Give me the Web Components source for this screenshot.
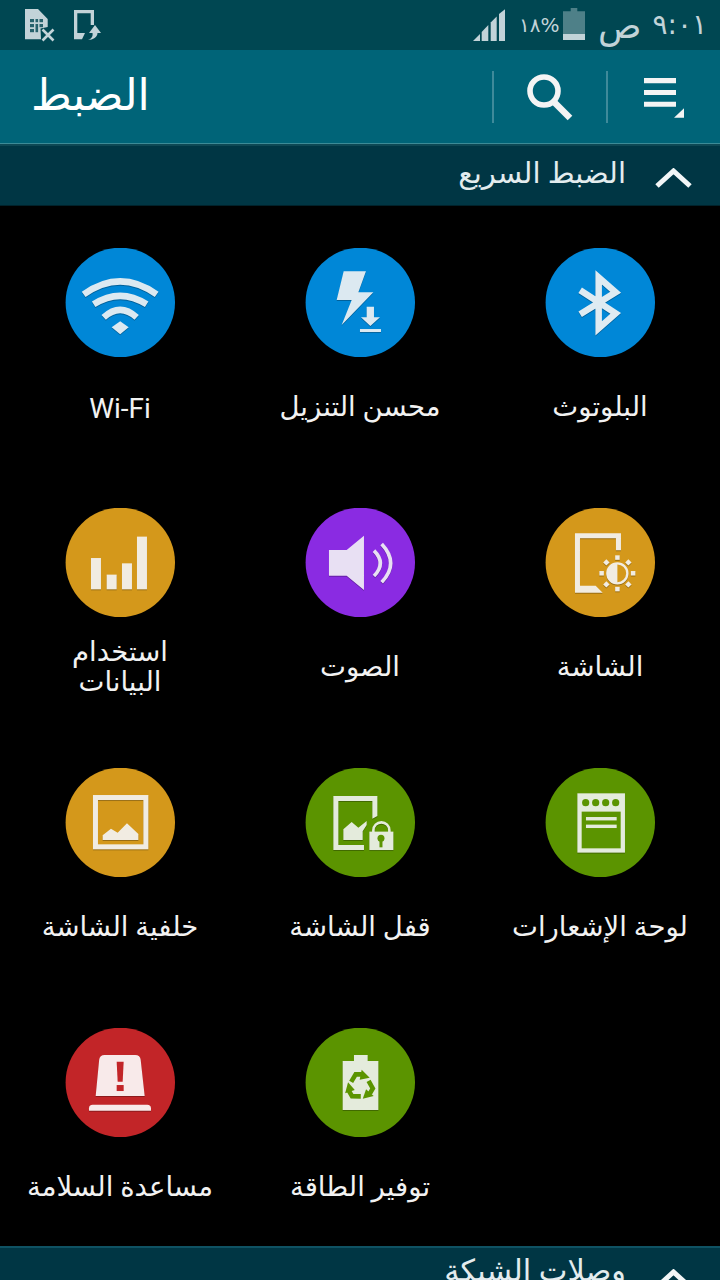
<!DOCTYPE html>
<html lang="ar" dir="rtl">
<head>
<meta charset="utf-8">
<title>الضبط</title>
<style>
  html, body { margin: 0; padding: 0; background: #000; }
  body { width: 720px; height: 1280px; overflow: hidden; font-family: Roboto, "DejaVu Sans", sans-serif; }
</style>
</head>
<body>
<status-bar></status-bar>
<action-bar title="الضبط"></action-bar>
<section-header label="الضبط السريع"></section-header>
<tile-grid>
  <quick-tile icon="bluetooth" color="#0087d7">البلوتوث</quick-tile>
  <quick-tile icon="booster" color="#0087d7">محسن التنزيل</quick-tile>
  <quick-tile icon="wifi" color="#0087d7"><span style="display:inline-block;padding-top:4px;font-size:28px">Wi-Fi</span></quick-tile>
  <quick-tile icon="display" color="#d4981b">الشاشة</quick-tile>
  <quick-tile icon="sound" color="#8a2be2">الصوت</quick-tile>
  <quick-tile icon="data" color="#d4981b">استخدام<br>البيانات</quick-tile>
  <quick-tile icon="panel" color="#5b9400">لوحة الإشعارات</quick-tile>
  <quick-tile icon="lock" color="#5b9400">قفل الشاشة</quick-tile>
  <quick-tile icon="wallpaper" color="#d4981b">خلفية الشاشة</quick-tile>
  <quick-tile></quick-tile>
  <quick-tile icon="power" color="#5b9400">توفير الطاقة</quick-tile>
  <quick-tile icon="safety" color="#c22528">مساعدة السلامة</quick-tile>
</tile-grid>
<section-header label="وصلات الشبكة" edge></section-header>

<script>
// icon art is in a 110x110 box, one entry per tile
const RECYCLE = `<path d="M45.5 53.5L50 46H56" fill="none" stroke="#5b9400" stroke-width="4.6"/><path d="M56 41.5L64 49.5L54 51.5Z" fill="#5b9400"/>`;
const ICONS = {
  wifi: `<g fill="none" stroke="#dce9f1" stroke-width="6.5">
      <path d="M18 47Q54.5 21 91 47"/><path d="M28 57Q54.5 40 81 57"/><path d="M38 70Q54.5 55 71 70"/></g>
    <path d="M46 80L54.5 74L63 80L54.5 87Z" fill="#dce9f1"/>`,
  booster: `<g fill="#dce9f1">
      <path d="M38 24H60.3L52.7 45H67.7L36 77.7L46 52.7H31Z"/>
      <path d="M61 59.3H68.3V70H74.3L64.7 78.7L55.3 70H61Z"/>
      <rect x="54.3" y="81.7" width="21" height="3"/></g>`,
  bluetooth: `<path d="M34.5 43L70 66L53 81V30L70 45L34.5 67" fill="none" stroke="#dfebf2" stroke-width="6.5"/>`,
  data: `<g fill="#f1ece2"><rect x="25.3" y="50.7" width="10" height="31.3"/><rect x="41" y="67.3" width="10" height="14.7"/>
      <rect x="56.3" y="56" width="10" height="26"/><rect x="71.3" y="29.3" width="10" height="52.7"/></g>`,
  sound: `<path d="M23.3 42.7H41L58.3 28.3V82.7L41 68.3H23.3Z" fill="#e8e0f3"/>
    <g fill="none" stroke="#e8e0f3" stroke-width="3.6"><path d="M68.3 43.3Q81 56 68.3 68.7"/><path d="M76 36.7Q94 56 76 75"/></g>`,
  display: `<path d="M29.3 26H75.3V43H70.3V31H34.3V78.3H50L57 85.3H29.3Z" fill="#f1ece2"/>
    <circle cx="71.7" cy="66" r="10" fill="#d4981b" stroke="#f1ece2" stroke-width="2.4"/>
    <path d="M71.7 56V76A10 10 0 0 1 71.7 56Z" fill="#f1ece2"/>
    <g fill="#f1ece2"><rect x="69.5" y="48" width="4.5" height="4.5"/><rect x="69.5" y="79.5" width="4.5" height="4.5"/>
      <rect x="53.7" y="63.7" width="4.5" height="4.5"/><rect x="85.2" y="63.7" width="4.5" height="4.5"/>
      <rect x="58.5" y="52.8" width="4.5" height="4.5" transform="rotate(45 60.7 55)"/><rect x="80.5" y="52.8" width="4.5" height="4.5" transform="rotate(45 82.7 55)"/>
      <rect x="58.5" y="74.8" width="4.5" height="4.5" transform="rotate(45 60.7 77)"/><rect x="80.5" y="74.8" width="4.5" height="4.5" transform="rotate(45 82.7 77)"/></g>`,
  wallpaper: `<rect x="29.8" y="30.2" width="50.4" height="49.3" fill="none" stroke="#f1ece2" stroke-width="5"/>
    <path d="M37 72.7V68L45.3 61.3L52 65.3L61.3 56L72.7 66.7V72.7Z" fill="#f1ece2"/>`,
  lock: `<path d="M27.7 28.7H71.7V48.7L66.7 51.3V33.7H32.7V77.7H58.3V82.7H27.7Z" fill="#e4ebdc"/>
    <path d="M37.7 72.7V62L46 54.7L52.7 60.3L61 53.7V57.7L57 64V72.7Z" fill="#e4ebdc"/>
    <path d="M67.7 65V63A8 8 0 0 1 83.7 63V65" fill="none" stroke="#e4ebdc" stroke-width="2.6"/>
    <rect x="63.7" y="64.3" width="24" height="18.4" fill="#e4ebdc"/>
    <circle cx="75.3" cy="71" r="3.5" fill="#5b9400"/><rect x="73.8" y="72" width="3" height="8" fill="#5b9400"/>`,
  panel: `<rect x="31.7" y="26" width="47.6" height="59.3" fill="#e4ebdc"/>
    <g fill="#5b9400"><circle cx="40" cy="35.3" r="3.6"/><circle cx="50" cy="35.3" r="3.6"/><circle cx="60" cy="35.3" r="3.6"/><circle cx="70" cy="35.3" r="3.6"/>
      <rect x="36" y="44.3" width="39" height="36.7"/></g>
    <g fill="#e4ebdc"><rect x="40.3" y="49.7" width="30.7" height="3.4"/><rect x="40.3" y="57.3" width="30.7" height="3.4"/></g>`,
  safety: `<path d="M30 68.7L33.5 32.5Q34 27.7 39 27.7H69.5Q74.5 27.7 75 32.5L79 68.7Z" fill="#f8eaea"/>
    <path d="M51 34.3H58L57 54.3H52Z" fill="#c22528"/><rect x="51" y="57.7" width="7" height="6" fill="#c22528"/>
    <path d="M23.3 83.3V81Q23.3 77.3 27 77.3H81.5Q85.3 77.3 85.3 81V83.3Z" fill="#f8eaea"/>`,
  power: `<path d="M48.3 27.7H62V33.7H72.7V82.7H37V33.7H48.3Z" fill="#e4ebdc"/>
    <g transform="translate(0 1)">${RECYCLE}<g transform="rotate(120 54.5 58)">${RECYCLE}</g><g transform="rotate(240 54.5 58)">${RECYCLE}</g></g>`
};

class StatusBar extends HTMLElement {
  constructor() {
    super();
    this.attachShadow({ mode: "open" });
    this.shadowRoot.innerHTML = `
      <style>
        :host { display: flex; direction: ltr; height: 50px; background: #004752; color: #c2d3d8; align-items: center; }
        svg { display: block; flex: none; }
        .left { margin-left: 24px; }
        .spacer { flex: 1; }
        .percent { font: 20px "DejaVu Sans", sans-serif; width: 38px; margin: 0 6px 0 13px; direction: ltr; unicode-bidi: isolate; white-space: nowrap; }
        .time { display: flex; align-items: center; gap: 11px; width: 105px; margin: 0 17px 0 13px; font-family: "DejaVu Sans", sans-serif; white-space: nowrap; }
        .ampm { font-size: 36px; line-height: 40px; margin-top: 2px; }
        .clock { font-size: 28px; line-height: 40px; letter-spacing: -2.5px; }
      </style>
      <svg class="left" width="80" height="50" viewBox="24 0 80 50">
        <path d="M25 9H38L47.7 19V27L40.5 28.5L41 39.3H25Z" fill="#c2d3d8"/>
        <g fill="#004752" opacity=".8"><rect x="30" y="19" width="4" height="3.2"/><rect x="30" y="24" width="4" height="3.2"/><rect x="30" y="29" width="4" height="3.2"/>
          <rect x="35.5" y="19" width="2.6" height="3.2"/><rect x="35.5" y="24" width="2.6" height="8.2"/><rect x="39.5" y="19" width="3.5" height="3.2"/><rect x="39.5" y="24" width="3.5" height="3.2"/></g>
        <path d="M42.5 29.5L53.5 40.5M53.5 29.5L42.5 40.5" stroke="#c2d3d8" stroke-width="2.6" fill="none"/>
        <path d="M74 10H94V25H90.7V13.3H77.3V33H85L82 39.3H74Z" fill="#c2d3d8"/>
        <path d="M95 25L101 33H97.5C97.5 37 93 40 88 40C92 38.5 93 36 92.5 33H89Z" fill="#c2d3d8"/>
      </svg>
      <div class="spacer"></div>
      <svg width="33" height="50" viewBox="474 0 33 50" fill="#c2d3d8">
        <path d="M474 41L481 34V41Z"/><path d="M482.7 32L489.3 25V41H482.7Z"/><path d="M491.7 22.5L497.7 16.5V41H491.7Z"/><path d="M500 14L506 9.3V41H500Z"/>
      </svg>
      <div class="percent" dir="ltr">&#x2066;١٨&#x2069;%</div>
      <svg width="22" height="50" viewBox="563 0 22 50">
        <path d="M570.7 8H577.3V11.3H585V34H563V11.3H570.7Z" fill="#4e8088"/>
        <rect x="563" y="34" width="22" height="6" fill="#c2d3d8"/>
      </svg>
      <div class="time"><span class="ampm">ص</span><span class="clock">٩:٠١</span></div>
    `;
  }
}

class ActionBar extends HTMLElement {
  constructor() {
    super();
    this.attachShadow({ mode: "open" });
    this.shadowRoot.innerHTML = `
      <style>
        :host { display: flex; height: 94px; background: #006478; border-bottom: 2px solid #0e4854; box-shadow: inset 0 -1px 0 #3d8b97; color: #fff; align-items: center; }
        .btn { flex: none; height: 52px; width: 114px; display: flex; align-items: center; justify-content: center; border-left: 2px solid #3f8a9a; box-sizing: border-box; }
        .title { flex: 1; font-size: 44px; padding: 0 0 4px 31px; text-align: left; direction: rtl; }
        h1 { all: unset; }
      </style>
      <div class="btn">
        <svg width="44" height="50" viewBox="0 0 44 50" style="margin-right:-3px"><path d="M0 6H32V11.3H0ZM0 18H32V23H0ZM0 29.7H32V34.7H0Z" fill="#f4f4f4"/><path d="M40 36.3V45.7H30Z" fill="#f4f4f4"/></svg>
      </div>
      <div class="btn">
        <svg width="46" height="50" viewBox="0 0 46 50" fill="none" stroke="#f4f4f4"><circle cx="17" cy="19" r="14" stroke-width="5.6"/><path d="M27 30L43 46" stroke-width="6.5"/></svg>
      </div>
      <div class="title"><h1>${this.getAttribute("title")}</h1></div>
    `;
  }
}

class SectionHeader extends HTMLElement {
  constructor() {
    super();
    this.attachShadow({ mode: "open" });
    this.shadowRoot.innerHTML = `
      <style>
        :host { display: flex; align-items: center; height: 60px; box-sizing: border-box; background: #003644; border-bottom: 1px solid #00222b; color: #e3ecee; padding: 0 28px 6px 0; gap: 29px; }
        :host([edge]) { border-top: 2px solid #0f5263; border-bottom: 0; padding-bottom: 12px; }
        svg { flex: none; margin-top: 10px; }
        :host([edge]) svg { margin-top: 16px; }
        span { font-size: 29px; line-height: 40px; white-space: nowrap; }
        :host([edge]) span { font-size: 30.4px; }
      </style>
      <svg width="37" height="20" viewBox="0 0 37 20"><path d="M2 18L18.5 3L35 18" fill="none" stroke="#f2f6f7" stroke-width="5"/></svg>
      <span>${this.getAttribute("label")}</span>
    `;
  }
}

class TileGrid extends HTMLElement {
  constructor() {
    super();
    this.attachShadow({ mode: "open" });
    this.shadowRoot.innerHTML = `
      <style>
        :host { display: grid; grid-template-columns: repeat(3, 240px); grid-auto-rows: 260px; background: #000; }
      </style>
      <slot></slot>
    `;
  }
}

class QuickTile extends HTMLElement {
  constructor() {
    super();
    this.attachShadow({ mode: "open" });
    const icon = this.getAttribute("icon");
    if (!icon) return;
    this.shadowRoot.innerHTML = `
      <style>
        :host { display: flex; flex-direction: column; align-items: center; padding-top: 42px; box-sizing: border-box; color: #f2f2f2; }
        svg { display: block; width: 110px; height: 110px; flex: none; }
        .art { filter: drop-shadow(0 1px 0 rgba(0,0,0,.28)); }
        .label { height: 64px; margin-top: 17px; display: flex; align-items: center; justify-content: center; width: 220px; font-size: 27.5px; line-height: 30px; text-align: center; }
      </style>
      <svg viewBox="0 0 110 110">
        <circle cx="55.3" cy="54.4" r="54.7" fill="${this.getAttribute("color")}"/>
        <g transform="translate(.67 -.67)"><g class="art">${ICONS[icon]}</g></g>
      </svg>
      <div class="label"><div><slot></slot></div></div>
    `;
  }
}

customElements.define("status-bar", StatusBar);
customElements.define("action-bar", ActionBar);
customElements.define("section-header", SectionHeader);
customElements.define("tile-grid", TileGrid);
customElements.define("quick-tile", QuickTile);
</script>
</body>
</html>
